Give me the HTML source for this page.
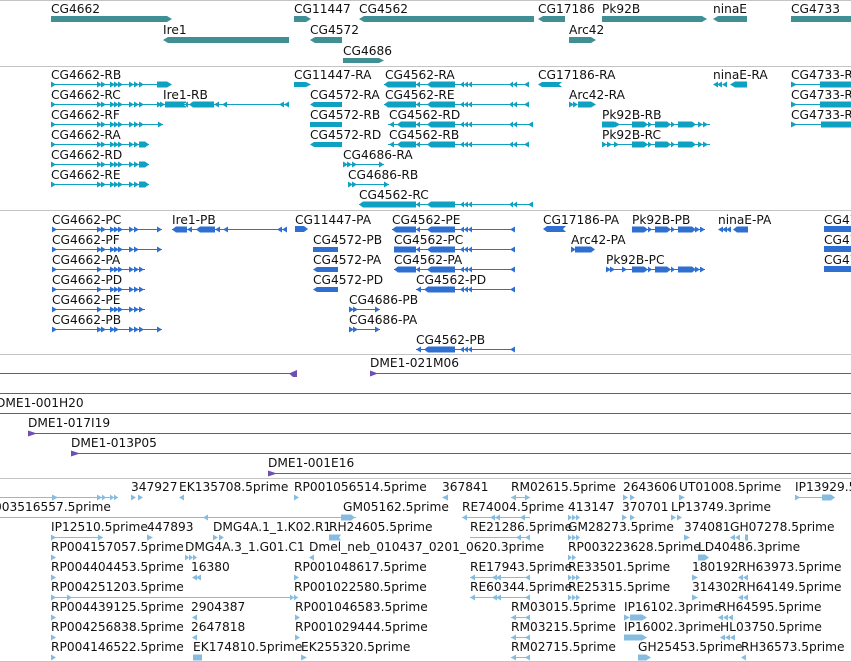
<!DOCTYPE html>
<html><head><meta charset="utf-8"><style>
html,body{margin:0;padding:0;background:#fff;width:851px;height:662px;overflow:hidden}
svg{display:block}
text{font-family:"DejaVu Sans","Liberation Sans",sans-serif;font-size:12.2px;fill:#111}
.sep{stroke:#c4c4c4;stroke-width:1}
.ln{stroke-width:1;fill:none}
</style></head><body>
<svg width="851" height="662" viewBox="0 0 851 662" xmlns="http://www.w3.org/2000/svg">
<line class="sep" x1="0" y1="0.5" x2="851" y2="0.5"/>
<line class="sep" x1="0" y1="66.5" x2="851" y2="66.5"/>
<line class="sep" x1="0" y1="210.5" x2="851" y2="210.5"/>
<line class="sep" x1="0" y1="354.5" x2="851" y2="354.5"/>
<line class="sep" x1="0" y1="478.5" x2="851" y2="478.5"/>
<line class="sep" x1="0" y1="661.5" x2="851" y2="661.5"/>

<g fill="#3f8f95">
<path d="M51 16H167L172 19L167 22H51Z"/>
<path d="M294 16H306L311 19L306 22H294Z"/>
<path d="M364 16H534V22H364L359 19Z"/>
<path d="M543 16H565V22H543L538 19Z"/>
<path d="M602 16H702L707 19L702 22H602Z"/>
<path d="M718 16H747V22H718L713 19Z"/>
<path d="M791 16H851V22H791Z"/>
<path d="M168 37H289V43H168L163 40Z"/>
<path d="M315 37H342V43H315L310 40Z"/>
<path d="M569 37H591L596 40L591 43H569Z"/>
<path d="M343 58H379L384 60.5L379 63H343Z"/>
</g>
<text x="51" y="13">CG4662</text>
<text x="294" y="13">CG11447</text>
<text x="359" y="13">CG4562</text>
<text x="538" y="13">CG17186</text>
<text x="602" y="13">Pk92B</text>
<text x="713" y="13">ninaE</text>
<text x="791" y="13">CG4733</text>
<text x="163" y="34">Ire1</text>
<text x="310" y="34">CG4572</text>
<text x="569" y="34">Arc42</text>
<text x="343" y="55">CG4686</text>

<g fill="#0ea1c1" stroke="#0ea1c1">
<g transform="translate(0,84.5)"><path class="ln" d="M51 0H163"/><path stroke="none" d="M51 -3l5 3-5 3zM97 -3l5 3-5 3zM101 -3l5 3-5 3zM110 -3l5 3-5 3zM114 -3l5 3-5 3zM118 -3l5 3-5 3zM129 -3l5 3-5 3zM134 -3l5 3-5 3zM139 -3l5 3-5 3zM157 -3h10l5 3-5 3h-10z"/></g>
<g transform="translate(0,104.5)"><path class="ln" d="M51 0H160"/><path stroke="none" d="M51 -3l5 3-5 3zM97 -3l5 3-5 3zM101 -3l5 3-5 3zM110 -3l5 3-5 3zM114 -3l5 3-5 3zM118 -3l5 3-5 3zM129 -3l5 3-5 3zM134 -3l5 3-5 3zM139 -3l5 3-5 3zM157 -3l5 3-5 3z"/></g>
<g transform="translate(0,124.5)"><path class="ln" d="M51 0H163"/><path stroke="none" d="M51 -3l5 3-5 3zM97 -3l5 3-5 3zM101 -3l5 3-5 3zM110 -3l5 3-5 3zM114 -3l5 3-5 3zM118 -3l5 3-5 3zM129 -3l5 3-5 3zM134 -3l5 3-5 3zM139 -3l5 3-5 3zM158 -3l5 3-5 3z"/></g>
<g transform="translate(0,144.5)"><path class="ln" d="M51 0H149"/><path stroke="none" d="M51 -3l5 3-5 3zM97 -3l5 3-5 3zM101 -3l5 3-5 3zM110 -3l5 3-5 3zM114 -3l5 3-5 3zM118 -3l5 3-5 3zM129 -3l5 3-5 3zM134 -3l5 3-5 3zM139 -3h6l4 3-4 3h-6z"/></g>
<g transform="translate(0,164.5)"><path class="ln" d="M51 0H149"/><path stroke="none" d="M51 -3l5 3-5 3zM97 -3l5 3-5 3zM101 -3l5 3-5 3zM110 -3l5 3-5 3zM114 -3l5 3-5 3zM118 -3l5 3-5 3zM129 -3l5 3-5 3zM134 -3l5 3-5 3zM139 -3h6l4 3-4 3h-6z"/></g>
<g transform="translate(0,184.5)"><path class="ln" d="M51 0H149"/><path stroke="none" d="M51 -3l5 3-5 3zM97 -3l5 3-5 3zM101 -3l5 3-5 3zM110 -3l5 3-5 3zM114 -3l5 3-5 3zM118 -3l5 3-5 3zM129 -3l5 3-5 3zM134 -3l5 3-5 3zM139 -3h6l4 3-4 3h-6z"/></g>
<g transform="translate(0,104.5)"><path class="ln" d="M160 0H289"/><path stroke="none" d="M160 -3l5 3-5 3zM165 -3h21v6h-21zM188 -3l-5 3 5 3zM193 -3h21v6h-21l-4-3zM219 -3l-5 3 5 3zM227 -3l-5 3 5 3zM284 -3l-5 3 5 3zM289 -3l-5 3 5 3z"/></g>
<path stroke="none" d="M294 82h12l5 2.5-5 2.5h-12z"/>
<path stroke="none" d="M314 102h28v5h-28l-4-2.5z"/>
<path stroke="none" d="M310 122h32v5h-32z"/>
<path stroke="none" d="M314 142h28v5h-28l-4-2.5z"/>
<g transform="translate(0,84.5)"><path class="ln" d="M384 0H529"/><path stroke="none" d="M388 -3h28v6h-28l-4-3zM420 -3l-4 3 4 3zM431 -3h24v6h-24l-4-3zM464 -3l-4 3 4 3zM468 -3l-4 3 4 3zM472 -3l-4 3 4 3zM513 -3l-4 3 4 3zM517 -3l-4 3 4 3zM529 -3l-5 3 5 3z"/></g>
<g transform="translate(0,104.5)"><path class="ln" d="M384 0H529"/><path stroke="none" d="M388 -3h28v6h-28l-4-3zM420 -3l-4 3 4 3zM431 -3h24v6h-24l-4-3zM464 -3l-4 3 4 3zM468 -3l-4 3 4 3zM472 -3l-4 3 4 3zM513 -3l-4 3 4 3zM517 -3l-4 3 4 3zM529 -3l-5 3 5 3z"/></g>
<g transform="translate(0,124.5)"><path class="ln" d="M388 0H533"/><path stroke="none" d="M394 -3l-5 3 5 3zM401 -3h15v6h-15l-4-3zM420 -3l-4 3 4 3zM431 -3h24v6h-24l-4-3zM464 -3l-4 3 4 3zM468 -3l-4 3 4 3zM472 -3l-4 3 4 3zM513 -3l-4 3 4 3zM517 -3l-4 3 4 3zM533 -3l-5 3 5 3z"/></g>
<g transform="translate(0,144.5)"><path class="ln" d="M388 0H529"/><path stroke="none" d="M394 -3l-5 3 5 3zM401 -3h15v6h-15l-4-3zM420 -3l-4 3 4 3zM431 -3h24v6h-24l-4-3zM464 -3l-4 3 4 3zM468 -3l-4 3 4 3zM472 -3l-4 3 4 3zM513 -3l-4 3 4 3zM517 -3l-4 3 4 3zM529 -3l-5 3 5 3z"/></g>
<g transform="translate(0,204.5)"><path class="ln" d="M359 0H533"/><path stroke="none" d="M363 -3h53v6h-53l-4-3zM420 -3l-4 3 4 3zM431 -3h24v6h-24l-4-3zM464 -3l-4 3 4 3zM468 -3l-4 3 4 3zM472 -3l-4 3 4 3zM513 -3l-4 3 4 3zM517 -3l-4 3 4 3zM533 -3l-5 3 5 3z"/></g>
<g transform="translate(0,164.5)"><path class="ln" d="M343 0H384"/><path stroke="none" d="M343 -3l5 3-5 3zM347 -3l5 3-5 3zM352 -3l5 3-5 3zM379 -3l5 3-5 3z"/></g>
<g transform="translate(0,184.5)"><path class="ln" d="M348 0H389"/><path stroke="none" d="M348 -3l5 3-5 3zM352 -3l5 3-5 3zM384 -3l5 3-5 3z"/></g>
<path stroke="none" d="M542 82h20l-3 2.5 3 2.5h-20l-4-2.5z"/>
<g transform="translate(0,104.5)"><path stroke="none" d="M569 -3l5 3-5 3zM573 -3l5 3-5 3zM578 -3h13l5 3-5 3h-13z"/></g>
<g transform="translate(0,124.5)"><path class="ln" d="M602 0H710"/><path stroke="none" d="M602 -3h12l4 3-4 3h-12zM615 -3l5 3-5 3zM632 -3h12l4 3-4 3h-12zM648 -3l4 3-4 3zM655 -3h12l4 3-4 3h-12zM671 -3l4 3-4 3zM678 -3h14l4 3-4 3h-14zM698 -3l5 3-5 3zM703 -3l5 3-5 3z"/></g>
<g transform="translate(0,144.5)"><path class="ln" d="M602 0H710"/><path stroke="none" d="M602 -3l5 3-5 3zM607 -3l5 3-5 3zM614 -3l5 3-5 3zM632 -3h12l4 3-4 3h-12zM648 -3l4 3-4 3zM655 -3h12l4 3-4 3h-12zM671 -3l4 3-4 3zM678 -3h14l4 3-4 3h-14zM698 -3l5 3-5 3zM703 -3l5 3-5 3z"/></g>
<g transform="translate(0,84.5)"><path stroke="none" d="M718 -3l-5 3 5 3zM722 -3l-5 3 5 3zM727 -3l-5 3 5 3zM735 -3h12v6h-12l-5-3z"/></g>
<g transform="translate(0,84.5)"><path class="ln" d="M791 0H851"/><path stroke="none" d="M791 -3l6 3-6 3zM820 -3h31v6h-31z"/></g>
<g transform="translate(0,104.5)"><path class="ln" d="M791 0H851"/><path stroke="none" d="M791 -3l6 3-6 3zM820 -3h31v6h-31z"/></g>
<g transform="translate(0,124.5)"><path class="ln" d="M791 0H851"/><path stroke="none" d="M791 -3l6 3-6 3zM821 -3h30v6h-30z"/></g>
</g>
<text x="51" y="79">CG4662-RB</text>
<text x="51" y="99">CG4662-RC</text>
<text x="51" y="119">CG4662-RF</text>
<text x="51" y="139">CG4662-RA</text>
<text x="51" y="159">CG4662-RD</text>
<text x="51" y="179">CG4662-RE</text>
<text x="163" y="99">Ire1-RB</text>
<text x="294" y="79">CG11447-RA</text>
<text x="385" y="79">CG4562-RA</text>
<text x="310" y="99">CG4572-RA</text>
<text x="385" y="99">CG4562-RE</text>
<text x="310" y="119">CG4572-RB</text>
<text x="389" y="119">CG4562-RD</text>
<text x="310" y="139">CG4572-RD</text>
<text x="389" y="139">CG4562-RB</text>
<text x="343" y="159">CG4686-RA</text>
<text x="348" y="179">CG4686-RB</text>
<text x="359" y="199">CG4562-RC</text>
<text x="538" y="79">CG17186-RA</text>
<text x="569" y="99">Arc42-RA</text>
<text x="602" y="119">Pk92B-RB</text>
<text x="602" y="139">Pk92B-RC</text>
<text x="713" y="79">ninaE-RA</text>
<text x="791" y="79">CG4733-RA</text>
<text x="791" y="99">CG4733-RB</text>
<text x="791" y="119">CG4733-RC</text>

<g fill="#2f6fd0" stroke="#2f6fd0">
<g transform="translate(0,229.5)"><path class="ln" d="M52 0H162"/><path stroke="none" d="M52 -3l5 3-5 3zM97 -3l5 3-5 3zM101 -3l5 3-5 3zM110 -3l5 3-5 3zM114 -3l5 3-5 3zM118 -3l5 3-5 3zM129 -3l5 3-5 3zM134 -3l5 3-5 3zM157 -3l5 3-5 3z"/></g>
<g transform="translate(0,249.5)"><path class="ln" d="M52 0H162"/><path stroke="none" d="M52 -3l5 3-5 3zM97 -3l5 3-5 3zM101 -3l5 3-5 3zM110 -3l5 3-5 3zM114 -3l5 3-5 3zM118 -3l5 3-5 3zM129 -3l5 3-5 3zM134 -3l5 3-5 3zM157 -3l5 3-5 3z"/></g>
<g transform="translate(0,269.5)"><path class="ln" d="M52 0H145"/><path stroke="none" d="M52 -3l5 3-5 3zM97 -3l5 3-5 3zM110 -3l5 3-5 3zM114 -3l5 3-5 3zM118 -3l5 3-5 3zM129 -3l5 3-5 3zM134 -3l5 3-5 3zM139 -3l5 3-5 3z"/></g>
<g transform="translate(0,289.5)"><path class="ln" d="M52 0H145"/><path stroke="none" d="M52 -3l5 3-5 3zM97 -3l5 3-5 3zM110 -3l5 3-5 3zM114 -3l5 3-5 3zM118 -3l5 3-5 3zM129 -3l5 3-5 3zM134 -3l5 3-5 3zM139 -3l5 3-5 3z"/></g>
<g transform="translate(0,309.5)"><path class="ln" d="M52 0H145"/><path stroke="none" d="M52 -3l5 3-5 3zM97 -3l5 3-5 3zM110 -3l5 3-5 3zM114 -3l5 3-5 3zM118 -3l5 3-5 3zM129 -3l5 3-5 3zM134 -3l5 3-5 3zM139 -3l5 3-5 3z"/></g>
<g transform="translate(0,329.5)"><path class="ln" d="M52 0H162"/><path stroke="none" d="M52 -3l5 3-5 3zM97 -3l5 3-5 3zM101 -3l5 3-5 3zM110 -3l5 3-5 3zM114 -3l5 3-5 3zM129 -3l5 3-5 3zM134 -3l5 3-5 3zM139 -3l5 3-5 3zM157 -3l5 3-5 3z"/></g>
<g transform="translate(0,229.5)"><path class="ln" d="M172 0H287"/><path stroke="none" d="M176 -3h11v6h-11l-4-3zM192 -3l-5 3 5 3zM200 -3h15v6h-15l-4-3zM220 -3l-5 3 5 3zM228 -3l-5 3 5 3zM282 -3l-5 3 5 3zM287 -3l-5 3 5 3z"/></g>
<path stroke="none" d="M295 226h9l4 3-4 3h-9z"/>
<path stroke="none" d="M313 247h25v5h-25z"/>
<path stroke="none" d="M317 267h21v5h-21l-4-2.5z"/>
<path stroke="none" d="M317 287h21v5h-21l-4-2.5z"/>
<g transform="translate(0,229.5)"><path class="ln" d="M392 0H515"/><path stroke="none" d="M396 -3h20v6h-20l-4-3zM420 -3l-4 3 4 3zM431 -3h24v6h-24l-4-3zM464 -3l-4 3 4 3zM468 -3l-4 3 4 3zM472 -3l-4 3 4 3zM515 -3l-5 3 5 3z"/></g>
<g transform="translate(0,249.5)"><path class="ln" d="M394 0H515"/><path stroke="none" d="M394 -3h22v6h-22zM420 -3l-4 3 4 3zM431 -3h24v6h-24l-4-3zM464 -3l-4 3 4 3zM468 -3l-4 3 4 3zM472 -3l-4 3 4 3zM515 -3l-5 3 5 3z"/></g>
<g transform="translate(0,269.5)"><path class="ln" d="M394 0H515"/><path stroke="none" d="M398 -3h18v6h-18l-4-3zM420 -3l-4 3 4 3zM431 -3h24v6h-24l-4-3zM464 -3l-4 3 4 3zM468 -3l-4 3 4 3zM472 -3l-4 3 4 3zM515 -3l-5 3 5 3z"/></g>
<g transform="translate(0,289.5)"><path class="ln" d="M416 0H515"/><path stroke="none" d="M421 -3l-5 3 5 3zM428 -3h27v6h-27l-4-3zM464 -3l-4 3 4 3zM468 -3l-4 3 4 3zM472 -3l-4 3 4 3zM515 -3l-5 3 5 3z"/></g>
<g transform="translate(0,349.5)"><path class="ln" d="M416 0H515"/><path stroke="none" d="M421 -3l-5 3 5 3zM428 -3h27v6h-27l-4-3zM464 -3l-4 3 4 3zM468 -3l-4 3 4 3zM472 -3l-4 3 4 3zM515 -3l-5 3 5 3z"/></g>
<g transform="translate(0,309.5)"><path class="ln" d="M349 0H380"/><path stroke="none" d="M349 -3l5 3-5 3zM353 -3l5 3-5 3zM375 -3l5 3-5 3z"/></g>
<g transform="translate(0,329.5)"><path class="ln" d="M349 0H380"/><path stroke="none" d="M349 -3l5 3-5 3zM353 -3l5 3-5 3zM375 -3l5 3-5 3z"/></g>
<path stroke="none" d="M547 226h19l-3 3 3 3h-19l-4-3z"/>
<g transform="translate(0,249.5)"><path stroke="none" d="M571 -3l5 3-5 3zM575 -3h16l4 3-4 3h-16z"/></g>
<g transform="translate(0,229.5)"><path class="ln" d="M632 0H705"/><path stroke="none" d="M632 -3h12l4 3-4 3h-12zM648 -3l4 3-4 3zM655 -3h12l4 3-4 3h-12zM671 -3l4 3-4 3zM678 -3h14l4 3-4 3h-14zM695 -3l5 3-5 3zM700 -3l5 3-5 3z"/></g>
<g transform="translate(0,269.5)"><path class="ln" d="M606 0H705"/><path stroke="none" d="M606 -3l5 3-5 3zM610 -3l5 3-5 3zM622 -3l5 3-5 3zM632 -3h12l4 3-4 3h-12zM648 -3l4 3-4 3zM655 -3h12l4 3-4 3h-12zM671 -3l4 3-4 3zM678 -3h14l4 3-4 3h-14zM695 -3l5 3-5 3zM700 -3l5 3-5 3z"/></g>
<g transform="translate(0,229.5)"><path stroke="none" d="M723 -3l-5 3 5 3zM727 -3l-5 3 5 3zM731 -3l-5 3 5 3zM737 -3h11v6h-11l-4-3z"/></g>
<path stroke="none" d="M824 226h27v6h-27z"/>
<path stroke="none" d="M824 246h27v6h-27z"/>
<path stroke="none" d="M824 266h27v6h-27z"/>
</g>
<text x="52" y="224">CG4662-PC</text>
<text x="52" y="244">CG4662-PF</text>
<text x="52" y="264">CG4662-PA</text>
<text x="52" y="284">CG4662-PD</text>
<text x="52" y="304">CG4662-PE</text>
<text x="52" y="324">CG4662-PB</text>
<text x="172" y="224">Ire1-PB</text>
<text x="295" y="224">CG11447-PA</text>
<text x="392" y="224">CG4562-PE</text>
<text x="313" y="244">CG4572-PB</text>
<text x="394" y="244">CG4562-PC</text>
<text x="313" y="264">CG4572-PA</text>
<text x="394" y="264">CG4562-PA</text>
<text x="313" y="284">CG4572-PD</text>
<text x="416" y="284">CG4562-PD</text>
<text x="349" y="304">CG4686-PB</text>
<text x="349" y="324">CG4686-PA</text>
<text x="416" y="344">CG4562-PB</text>
<text x="543" y="224">CG17186-PA</text>
<text x="632" y="224">Pk92B-PB</text>
<text x="718" y="224">ninaE-PA</text>
<text x="824" y="224">CG4733-PA</text>
<text x="571" y="244">Arc42-PA</text>
<text x="824" y="244">CG4733-PB</text>
<text x="606" y="264">Pk92B-PC</text>
<text x="824" y="264">CG4733-PC</text>

<g fill="#6f50b0" stroke="#6f50b0">
<path class="ln" d="M0 373.5H297M370 373.5H851M0 393.5H851M0 413.5H851M28 433.5H851M71 453.5H851M268 473.5H851"/>
<path stroke="none" d="M297 370v7h-4l-4-3.5z"/>
<path stroke="none" d="M370 370.5l8 3-8 3z"/>
<path stroke="none" d="M28 430.5l9 3-9 3z"/>
<path stroke="none" d="M71 450.5l9 3-9 3z"/>
<path stroke="none" d="M268 470.5l9 3-9 3z"/>
</g>
<text x="370" y="367">DME1-021M06</text>
<text x="-4" y="407">DME1-001H20</text>
<text x="28" y="427">DME1-017I19</text>
<text x="71" y="447">DME1-013P05</text>
<text x="268" y="467">DME1-001E16</text>

<g fill="#86bce0" stroke="#86bce0">
<g transform="translate(0,497.5)"><path class="ln" d="M0 0H118M511 0H530M795 0H835"/><path stroke="none" d="M52 -3l6 3-6 3zM97 -3l5 3-5 3zM102 -3l4 3-4 3zM110 -3l4 3-4 3zM114 -3l4 3-4 3zM131 -3l5 3-5 3zM138 -3l5 3-5 3zM184 -3l-5 3 5 3zM294 -3l5 3-5 3zM448 -3l-6 3 6 3zM516 -3l-5 3 5 3zM525 -3l5 3-5 3zM623 -3l5 3-5 3zM630 -3l5 3-5 3zM679 -3l6 3-6 3zM795 -3l5 3-5 3zM822 -3h9l4 3-4 3h-9z"/></g>
<g transform="translate(0,517.5)"><path class="ln" d="M0 0H356M462 0H530"/><path stroke="none" d="M208 -3l-5 3 5 3zM341 -3h10l4 3-4 3h-10zM347 -3l8 3-8 3zM467 -3l-5 3 5 3zM495 -3l-5 3 5 3zM500 -3l-5 3 5 3zM525 -3l-5 3 5 3zM568 -3l4 3-4 3zM572 -3l4 3-4 3zM576 -3l4 3-4 3zM622 -3l5 3-5 3zM630 -3l5 3-5 3zM671 -3l5 3-5 3zM677 -3l5 3-5 3z"/></g>
<g transform="translate(0,537.5)"><path class="ln" d="M51 0H103M470 0H530"/><path stroke="none" d="M51 -3l5 3-5 3zM98 -3l5 3-5 3zM147 -3l6 3-6 3zM213 -3l5 3-5 3zM219 -3l5 3-5 3zM329 -3h12l-2 3 2 3h-12z"/><path stroke="none" d="M521 -3l-5 3 5 3zM530 -3l-5 3 5 3zM568 -3l4 3-4 3zM572 -3l4 3-4 3zM576 -3l4 3-4 3zM684 -3l6 3-6 3zM735 -3l-5 3 5 3zM740 -3l-5 3 5 3zM745 -3h3v6h-3z"/></g>
<g transform="translate(0,557.5)"><path stroke="none" d="M51 -3l5 3-5 3zM185 -3l4 3-4 3zM189 -3l4 3-4 3zM193 -3l4 3-4 3zM314 -3l-5 3 5 3zM568 -3l4 3-4 3zM572 -3l4 3-4 3zM698 -3h7l4 3-4 3h-7z"/></g>
<g transform="translate(0,577.5)"><path class="ln" d="M51 0H55M470 0H530"/><path stroke="none" d="M51 -3l5 3-5 3zM197 -3l-5 3 5 3zM201 -3l-5 3 5 3zM294 -3l5 3-5 3zM475 -3l-5 3 5 3zM497 -3l-5 3 5 3zM501 -3l-5 3 5 3zM530 -3l-5 3 5 3zM568 -3l4 3-4 3zM572 -3l4 3-4 3zM576 -3l4 3-4 3zM692 -3l6 3-6 3zM743 -3l-5 3 5 3zM748 -3l-5 3 5 3z"/></g>
<g transform="translate(0,597.5)"><path class="ln" d="M51 0H298M470 0H530"/><path stroke="none" d="M51 -3l5 3-5 3zM67 -3l5 3-5 3zM290 -3l4 3-4 3zM294 -3l4 3-4 3zM475 -3l-5 3 5 3zM497 -3l-5 3 5 3zM501 -3l-5 3 5 3zM530 -3l-5 3 5 3zM568 -3l4 3-4 3zM572 -3l4 3-4 3zM576 -3l4 3-4 3zM692 -3l6 3-6 3zM743 -3l-5 3 5 3zM748 -3l-5 3 5 3z"/></g>
<g transform="translate(0,617.5)"><path class="ln" d="M511 0H530"/><path stroke="none" d="M51 -3l5 3-5 3zM197 -3l-5 3 5 3zM295 -3l5 3-5 3zM516 -3l-5 3 5 3zM530 -3l-5 3 5 3zM624 -3l6 3-6 3zM630 -3h12l5 3-5 3h-12zM723 -3l-5 3 5 3zM728 -3l-5 3 5 3zM733 -3l-5 3 5 3z"/></g>
<g transform="translate(0,637.5)"><path class="ln" d="M511 0H530"/><path stroke="none" d="M51 -3l5 3-5 3zM197 -3l-5 3 5 3zM295 -3l5 3-5 3zM516 -3l-5 3 5 3zM530 -3l-5 3 5 3zM624 -3h18l5 3-5 3h-18zM725 -3l-5 3 5 3zM730 -3l-5 3 5 3zM735 -3l-5 3 5 3z"/></g>
<g transform="translate(0,657.5)"><path class="ln" d="M511 0H530"/><path stroke="none" d="M51 -3l5 3-5 3zM193 -3h9v6h-9zM301 -3l6 3-6 3zM516 -3l-5 3 5 3zM530 -3l-5 3 5 3zM638 -3h8l5 3-5 3h-8zM646 -3l5 3-5 3zM746 -3l-5 3 5 3z"/></g>
</g>
<g>
<text x="131" y="491">347927</text><text x="179" y="491">EK135708.5prime</text><text x="294" y="491">RP001056514.5prime</text><text x="442" y="491">367841</text><text x="511" y="491">RM02615.5prime</text><text x="623" y="491">2643606</text><text x="679" y="491">UT01008.5prime</text><text x="795" y="491">IP13929.5prime</text>
<text x="-6" y="511">003516557.5prime</text><text x="343" y="511">GM05162.5prime</text><text x="462" y="511">RE74004.5prime</text><text x="568" y="511">413147</text><text x="622" y="511">370701</text><text x="671" y="511">LP13749.3prime</text>
<text x="51" y="531">IP12510.5prime</text><text x="147" y="531">447893</text><text x="213" y="531">DMG4A.1_1.K02.R1</text><text x="329" y="531">RH24605.5prime</text><text x="470" y="531">RE21286.5prime</text><text x="568" y="531">GM28273.5prime</text><text x="684" y="531">374081</text><text x="730" y="531">GH07278.5prime</text>
<text x="51" y="551">RP004157057.5prime</text><text x="185" y="551">DMG4A.3_1.G01.C1</text><text x="309" y="551">Dmel_neb_010437_0201_0620.3prime</text><text x="568" y="551">RP003223628.5prime</text><text x="698" y="551">LD40486.3prime</text>
<text x="51" y="571">RP004404453.5prime</text><text x="191" y="571">16380</text><text x="294" y="571">RP001048617.5prime</text><text x="470" y="571">RE17943.5prime</text><text x="568" y="571">RE33501.5prime</text><text x="692" y="571">180192</text><text x="738" y="571">RH63973.5prime</text>
<text x="51" y="591">RP004251203.5prime</text><text x="294" y="591">RP001022580.5prime</text><text x="470" y="591">RE60344.5prime</text><text x="568" y="591">RE25315.5prime</text><text x="692" y="591">314302</text><text x="738" y="591">RH64149.5prime</text>
<text x="51" y="611">RP004439125.5prime</text><text x="191" y="611">2904387</text><text x="295" y="611">RP001046583.5prime</text><text x="511" y="611">RM03015.5prime</text><text x="624" y="611">IP16102.3prime</text><text x="718" y="611">RH64595.5prime</text>
<text x="51" y="631">RP004256838.5prime</text><text x="191" y="631">2647818</text><text x="295" y="631">RP001029444.5prime</text><text x="511" y="631">RM03215.5prime</text><text x="624" y="631">IP16002.3prime</text><text x="720" y="631">HL03750.5prime</text>
<text x="51" y="651">RP004146522.5prime</text><text x="193" y="651">EK174810.5prime</text><text x="301" y="651">EK255320.5prime</text><text x="511" y="651">RM02715.5prime</text><text x="638" y="651">GH25453.5prime</text><text x="741" y="651">RH36573.5prime</text>
</g>
</svg>
</body></html>
